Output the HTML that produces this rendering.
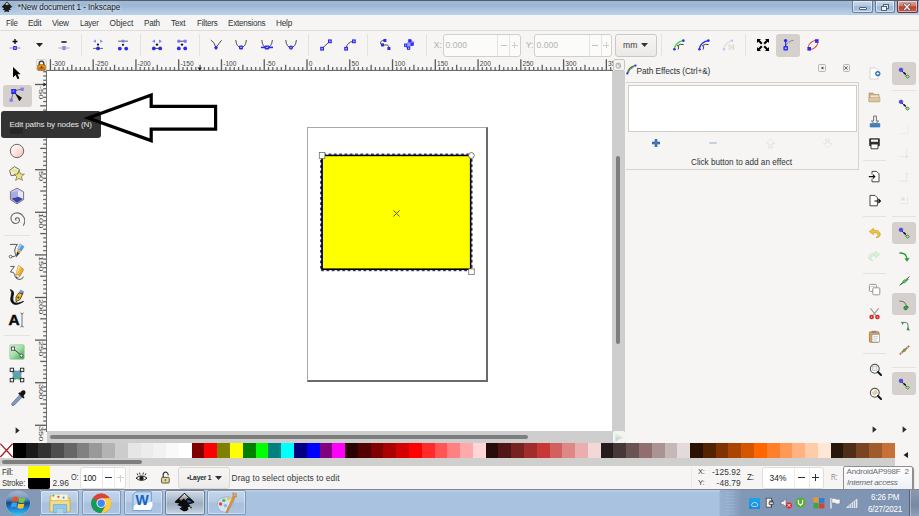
<!DOCTYPE html>
<html lang="en"><head><meta charset="utf-8"><title>*New document 1 - Inkscape</title>
<style>
html,body{margin:0;padding:0;}
html{width:919px;height:516px;overflow:hidden;background:#f6f5f4;}
body{width:919px;height:516px;overflow:hidden;position:relative;background:#f6f5f4;
 font-family:"Liberation Sans","DejaVu Sans",sans-serif;font-size:8.5px;color:#2e3436;}
div,span,svg{position:absolute;box-sizing:border-box;}
.t{white-space:nowrap;line-height:14px;height:14px;}
.sep{background:#e4e2df;}
.sel{background:#d5d0cc;border-radius:3px;}
.inp{background:#fbfbfa;border:1px solid #d2cfcb;border-radius:3px;}
</style></head>
<body>
<div style="left:0px;top:0px;width:919px;height:14.6px;background:linear-gradient(#a3bbd7 0,#a0b9d6 10%,#9cb6d3 38%,#a4bdd9 52%,#afc6e1 68%,#b4cbe5 82%,#b8d1eb 100%);"></div>
<div style="left:0px;top:0px;width:919px;height:1.2px;background:linear-gradient(#4a5361,#5d6878);"></div>
<span class="t" style="left:17.80px;top:1.10px;font-size:8.2px;color:#14181e;letter-spacing:-0.089px;text-shadow:0 0 3px rgba(255,255,255,.9),0 0 5px rgba(255,255,255,.6);">*New document 1 - Inkscape</span>
<svg style="left:1px;top:1px;width:12px;height:12px" viewBox="0 0 12 12"><path d="M6 0.6 L11.3 6 L8.6 7.2 L10.2 8.6 L7.6 9.2 L8.2 11 L5 10.6 L3.2 11.2 L3.8 9.2 L1.4 8.6 L3.2 7.2 L0.6 6 Z" fill="#1a1a1a"/><path d="M6 1.6 L8 3.8 L6.8 3.4 L6 4.2 L5 3.4 L3.9 3.9 Z" fill="#cfd6de"/></svg>
<div style="left:852.4px;top:1px;width:20.8px;height:11.6px;background:linear-gradient(#c6d8ed 0,#b2cae5 45%,#9cb9d9 52%,#adc7e5 100%);border:1px solid #6d7f96;border-top:none;border-radius:0 0 2.5px 2.5px;box-shadow:0 0 0 1px rgba(255,255,255,.5) inset;"></div>
<div style="left:874.8px;top:1px;width:20.6px;height:11.6px;background:linear-gradient(#c6d8ed 0,#b2cae5 45%,#9cb9d9 52%,#adc7e5 100%);border:1px solid #6d7f96;border-top:none;border-radius:0 0 2.5px 2.5px;box-shadow:0 0 0 1px rgba(255,255,255,.5) inset;"></div>
<div style="left:897px;top:1px;width:20.8px;height:11.6px;background:linear-gradient(#dba9a2 0,#d0786c 45%,#bd4232 52%,#c65a4c 100%);border:1px solid #6a3434;border-top:none;border-radius:0 0 2.5px 2.5px;box-shadow:0 0 0 1px rgba(255,255,255,.5) inset;"></div>
<div style="left:859px;top:7px;width:7.8px;height:2.8px;background:#f4f6f8;border:0.8px solid #55606e;border-radius:1px;"></div>
<div style="left:882.6px;top:3.8px;width:6px;height:5px;background:#dfe7f1;border:1px solid #55606e;"></div>
<div style="left:880.6px;top:5.8px;width:6px;height:5px;background:#eef2f7;border:1px solid #55606e;"></div>
<svg style="left:903.4px;top:3.2px;width:8px;height:8px" viewBox="0 0 8 8"><path d="M1.6 1.6 L6.4 6.4 M6.4 1.6 L1.6 6.4" stroke="#5a4a4a" stroke-width="2.6" stroke-linecap="square"/><path d="M1.6 1.6 L6.4 6.4 M6.4 1.6 L1.6 6.4" stroke="#f4f0f0" stroke-width="1.4" stroke-linecap="square"/></svg>
<div style="left:0px;top:15px;width:919px;height:15px;background:#f6f5f4;"></div>
<div style="left:0px;top:30px;width:919px;height:1px;background:#dfdcd9;"></div>
<span class="t" style="left:5.70px;top:15.70px;font-size:8.3px;color:#2e3436;letter-spacing:-0.220px;transform-origin:0 50%;transform:scaleX(0.9360);">File</span>
<span class="t" style="left:28.30px;top:15.70px;font-size:8.3px;color:#2e3436;letter-spacing:-0.220px;transform-origin:0 50%;transform:scaleX(0.9896);">Edit</span>
<span class="t" style="left:52.30px;top:15.70px;font-size:8.3px;color:#2e3436;letter-spacing:-0.220px;transform-origin:0 50%;transform:scaleX(0.9895);">View</span>
<span class="t" style="left:80.20px;top:15.70px;font-size:8.3px;color:#2e3436;letter-spacing:-0.220px;transform-origin:0 50%;transform:scaleX(0.9456);">Layer</span>
<span class="t" style="left:109.60px;top:15.70px;font-size:8.3px;color:#2e3436;letter-spacing:-0.058px;">Object</span>
<span class="t" style="left:144.00px;top:15.70px;font-size:8.3px;color:#2e3436;letter-spacing:-0.220px;transform-origin:0 50%;transform:scaleX(0.9748);">Path</span>
<span class="t" style="left:171.00px;top:15.70px;font-size:8.3px;color:#2e3436;letter-spacing:-0.220px;transform-origin:0 50%;transform:scaleX(0.9957);">Text</span>
<span class="t" style="left:196.60px;top:15.70px;font-size:8.3px;color:#2e3436;letter-spacing:-0.220px;transform-origin:0 50%;transform:scaleX(0.9730);">Filters</span>
<span class="t" style="left:227.50px;top:15.70px;font-size:8.3px;color:#2e3436;letter-spacing:-0.220px;transform-origin:0 50%;transform:scaleX(0.9710);">Extensions</span>
<span class="t" style="left:276.00px;top:15.70px;font-size:8.3px;color:#2e3436;letter-spacing:-0.220px;transform-origin:0 50%;transform:scaleX(0.9933);">Help</span>
<div class="sep" style="left:80.7px;top:34px;width:1px;height:22px;"></div>
<div class="sep" style="left:140.1px;top:34px;width:1px;height:22px;"></div>
<div class="sep" style="left:198.9px;top:34px;width:1px;height:22px;"></div>
<div class="sep" style="left:308.2px;top:34px;width:1px;height:22px;"></div>
<div class="sep" style="left:367.2px;top:34px;width:1px;height:22px;"></div>
<div class="sep" style="left:426.0px;top:34px;width:1px;height:22px;"></div>
<div class="sep" style="left:661.0px;top:34px;width:1px;height:22px;"></div>
<div class="sep" style="left:744.9px;top:34px;width:1px;height:22px;"></div>
<div class="sel" style="left:776px;top:33.5px;width:24px;height:23px;"></div>
<svg style="left:7.70px;top:38.00px;width:14px;height:14px" viewBox="0 0 14 14"><path d="M7 1 V6 M4.6 3.5 H9.4" stroke="#000" stroke-width="1.3"/><path d="M1.6 10 H12.4" stroke="#8a8a8a" stroke-width="0.9"/><rect x="5.2" y="8" width="3.6" height="4" fill="#2a2af0"/><rect x="6.2" y="9.2" width="1.6" height="1.6" fill="#b9b9ff"/></svg><svg style="left:35.50px;top:42.70px;width:7px;height:4px" viewBox="0 0 7 4"><path d="M0 0 H7 L3.5 4 Z" fill="#222"/></svg><svg style="left:57.00px;top:38.00px;width:14px;height:14px" viewBox="0 0 14 14"><path d="M4.4 4 H9.6" stroke="#000" stroke-width="1.4"/><path d="M1.6 10 H12.4" stroke="#a5a5a5" stroke-width="0.9"/><rect x="5.2" y="8" width="3.6" height="4" fill="#8d8df7"/></svg><svg style="left:91.00px;top:38.00px;width:14px;height:14px" viewBox="0 0 14 14"><path d="M2.2 3.2 L4.8 1.6 V4.8 Z M11.8 3.2 L9.2 1.6 V4.8 Z" fill="#7b7bf5"/><circle cx="7" cy="6.6" r="1.1" fill="#111"/><path d="M2 10.4 H12" stroke="#555" stroke-width="0.9"/><circle cx="7" cy="10.4" r="1.9" fill="#2a2af0"/></svg><svg style="left:115.80px;top:38.00px;width:14px;height:14px" viewBox="0 0 14 14"><path d="M2 3.2 H12" stroke="#555" stroke-width="0.9"/><rect x="5.4" y="1.8" width="3.2" height="2.8" rx="1" fill="#7b7bf5"/><circle cx="7" cy="6.8" r="1.1" fill="#111"/><circle cx="3.8" cy="10.6" r="1.9" fill="#2a2af0"/><circle cx="10.2" cy="10.6" r="1.9" fill="#2a2af0"/></svg><svg style="left:150.20px;top:38.00px;width:14px;height:14px" viewBox="0 0 14 14"><path d="M2 3.2 L5 1.4 V5 Z M12 3.2 L9 1.4 V5 Z" fill="#7b7bf5"/><circle cx="7" cy="6.6" r="1.2" fill="#111"/><path d="M3 10.4 H11" stroke="#333" stroke-width="0.9"/><circle cx="3.8" cy="10.4" r="1.9" fill="#2a2af0"/><circle cx="10.2" cy="10.4" r="1.9" fill="#2a2af0"/></svg><svg style="left:175.00px;top:38.00px;width:14px;height:14px" viewBox="0 0 14 14"><path d="M3 3.2 H11" stroke="#333" stroke-width="0.9"/><circle cx="3.8" cy="3.2" r="1.7" fill="#7b7bf5"/><circle cx="10.2" cy="3.2" r="1.7" fill="#7b7bf5"/><circle cx="7" cy="6.6" r="1.2" fill="#111"/><circle cx="3.8" cy="10.4" r="1.9" fill="#2a2af0"/><circle cx="10.2" cy="10.4" r="1.9" fill="#2a2af0"/></svg><svg style="left:209.40px;top:38.00px;width:14px;height:14px" viewBox="0 0 14 14"><path d="M1.8 2 Q5 3.4 7 9.6 Q9.6 6 12.6 2.2" fill="none" stroke="#3a3a3a" stroke-width="0.9"/><path d="M7 7.6 L9 9.8 L7 12 L5 9.8 Z" fill="#2a2af0"/></svg><svg style="left:234.30px;top:38.00px;width:14px;height:14px" viewBox="0 0 14 14"><path d="M1.8 2 Q2.4 9.4 7 9.4 Q11.6 9.4 12.4 2" fill="none" stroke="#3a3a3a" stroke-width="0.9"/><rect x="5" y="7.6" width="4" height="3.8" rx="0.8" fill="#2a2af0"/><rect x="6.1" y="8.8" width="1.8" height="1.2" fill="#a9a9ff"/></svg><svg style="left:259.50px;top:38.00px;width:14px;height:14px" viewBox="0 0 14 14"><path d="M1.8 2 Q2.4 9.4 7 9.4 Q11.6 9.4 12.4 2" fill="none" stroke="#3a3a3a" stroke-width="0.9"/><path d="M1 9.4 H13" stroke="#2a2af0" stroke-width="1.6"/><rect x="4.6" y="7.6" width="4.8" height="3.8" rx="0.8" fill="#2a2af0"/><rect x="5.8" y="8.8" width="2.4" height="1.2" fill="#a9a9ff"/></svg><svg style="left:284.30px;top:38.00px;width:14px;height:14px" viewBox="0 0 14 14"><path d="M1.8 2 Q2.4 9.4 7 9.4 Q11.6 9.4 12.4 2" fill="none" stroke="#3a3a3a" stroke-width="0.9"/><circle cx="7" cy="9.6" r="2.1" fill="#2a2af0"/><circle cx="7" cy="9.6" r="0.8" fill="#a9a9ff"/></svg><svg style="left:318.70px;top:38.00px;width:14px;height:14px" viewBox="0 0 14 14"><path d="M3 10.6 L10.8 3.2" stroke="#3a3a3a" stroke-width="0.9"/><rect x="1.2" y="8.8" width="3.8" height="3.8" fill="#2a2af0"/><rect x="2.3" y="9.9" width="1.6" height="1.6" fill="#a9a9ff"/><rect x="9" y="1.4" width="3.8" height="3.8" fill="#2a2af0"/><rect x="10.1" y="2.5" width="1.6" height="1.6" fill="#a9a9ff"/></svg><svg style="left:343.00px;top:38.00px;width:14px;height:14px" viewBox="0 0 14 14"><path d="M3 10.6 Q4 4 10.8 3.2" fill="none" stroke="#3a3a3a" stroke-width="0.9"/><rect x="1.2" y="8.8" width="3.8" height="3.8" fill="#2a2af0"/><rect x="2.3" y="9.9" width="1.6" height="1.6" fill="#a9a9ff"/><rect x="9" y="1.4" width="3.8" height="3.8" fill="#2a2af0"/><rect x="10.1" y="2.5" width="1.6" height="1.6" fill="#a9a9ff"/></svg><svg style="left:377.70px;top:38.00px;width:14px;height:14px" viewBox="0 0 14 14"><path d="M6.6 2.4 Q2 2 2.6 6 Q3.4 8 7 7 Q11.4 6 11 11" fill="none" stroke="#555" stroke-width="1"/><rect x="5.4" y="1" width="3" height="3" fill="#2a2af0"/><rect x="3" y="5.4" width="3" height="3" fill="#2a2af0"/><rect x="9.4" y="9" width="3" height="3" fill="#2a2af0"/></svg><svg style="left:402.20px;top:38.00px;width:14px;height:14px" viewBox="0 0 14 14"><path d="M2 7.6 L8.6 1.6 L12.6 4 L6 12 Z" fill="#9a9af8"/><rect x="6.2" y="1.2" width="3.2" height="3.2" fill="#2a2af0"/><rect x="2" y="5.6" width="3.2" height="3.2" fill="#2a2af0"/><rect x="8.6" y="4.6" width="3.2" height="3.2" fill="#2a2af0"/><rect x="5" y="8.6" width="3.2" height="3.2" fill="#2a2af0"/><rect x="3" y="6.6" width="1.2" height="1.2" fill="#c5c5ff"/><rect x="6" y="9.6" width="1.2" height="1.2" fill="#c5c5ff"/></svg><svg style="left:672.00px;top:38.00px;width:14px;height:14px" viewBox="0 0 14 14"><path d="M2.4 11 Q3.4 4 11.4 2.6" fill="none" stroke="#3fd13f" stroke-width="1.2"/><path d="M6 11.6 Q7.6 8.4 5 7.4 M6 7.4 Q8.6 5.6 11.6 6.6" fill="none" stroke="#2a2a2a" stroke-width="0.9"/><circle cx="2.4" cy="11.2" r="1.3" fill="#2a2af0"/><circle cx="11.4" cy="2.6" r="1.3" fill="#2a2af0"/></svg><svg style="left:696.90px;top:38.00px;width:14px;height:14px" viewBox="0 0 14 14"><path d="M2.4 11 Q3.4 4 11.4 2.6" fill="none" stroke="#2a2af0" stroke-width="1.2"/><path d="M6 11.6 Q7.6 8.4 5 7.4 M6 7.4 Q8.6 5.6 11.6 6.6" fill="none" stroke="#2a2a2a" stroke-width="0.9"/><circle cx="2.4" cy="11.2" r="1.3" fill="#2a2af0"/><circle cx="11.4" cy="2.6" r="1.3" fill="#2a2af0"/></svg><svg style="left:721.40px;top:38.00px;width:14px;height:14px" viewBox="0 0 14 14"><g opacity="0.4"><path d="M3 11 Q4 5 11 2.6" fill="none" stroke="#8a8a8a" stroke-width="1.1" stroke-dasharray="1.4 1"/><path d="M8 6.6 L11.6 9.2 L8 11.8 Z" fill="#f2e08a" stroke="#9a9a9a" stroke-width="0.6"/><path d="M12.4 6.6 V11.8" stroke="#8a8a8a" stroke-width="0.9"/><circle cx="3" cy="11.2" r="1.2" fill="#7b7bf5"/><circle cx="11" cy="2.6" r="1.2" fill="#7b7bf5"/></g></svg><svg style="left:755.80px;top:38.00px;width:14px;height:14px" viewBox="0 0 14 14"><path d="M2.6 2.6 L5.8 5.8 M11.4 2.6 L8.2 5.8 M2.6 11.4 L5.8 8.2 M11.4 11.4 L8.2 8.2" stroke="#000" stroke-width="2.1"/><path d="M1 1 H5 L1 5 Z M13 1 H9 L13 5 Z M1 13 H5 L1 9 Z M13 13 H9 L13 9 Z" fill="#000"/></svg><svg style="left:780.50px;top:38.00px;width:14px;height:14px" viewBox="0 0 14 14"><path d="M4.6 8 Q6 3.6 12.6 2.2" fill="none" stroke="#8a8a8a" stroke-width="1"/><path d="M4.6 3 V9" stroke="#2a2af0" stroke-width="1.1"/><circle cx="4.6" cy="2.6" r="1.7" fill="#2a2af0"/><rect x="2.4" y="8" width="4.6" height="4.6" rx="0.8" fill="#2a2af0"/><rect x="3.8" y="9.4" width="1.8" height="1.8" fill="#c5c5ff"/></svg><svg style="left:805.60px;top:38.00px;width:14px;height:14px" viewBox="0 0 14 14"><ellipse cx="7" cy="7" rx="5.6" ry="3.2" transform="rotate(-42 7 7)" fill="none" stroke="#ee3b3b" stroke-width="1.1"/><rect x="9" y="1.2" width="3.6" height="3.6" fill="#2a2af0"/><rect x="1.4" y="9" width="3.6" height="3.6" fill="#2a2af0"/></svg>
<span class="t" style="left:433.80px;top:38.00px;font-size:8.6px;color:#aeaca9;">X:</span>
<div class="inp" style="left:443px;top:33.5px;width:77.5px;height:23px;"></div>
<div style="left:497px;top:34.5px;width:1px;height:21px;background:#e6e4e1;"></div>
<div style="left:509px;top:34.5px;width:1px;height:21px;background:#e6e4e1;"></div>
<span class="t" style="left:445.50px;top:38.00px;font-size:8.6px;color:#b4b2af;">0.000</span>
<div style="left:500.5px;top:44.5px;width:6px;height:1px;background:#c4c2bf;"></div>
<div style="left:511.75px;top:44.5px;width:6px;height:1px;background:#cfcdca;"></div>
<div style="left:514.25px;top:42px;width:1px;height:6px;background:#cfcdca;"></div>
<span class="t" style="left:525.70px;top:38.00px;font-size:8.6px;color:#aeaca9;">Y:</span>
<div class="inp" style="left:534px;top:33.5px;width:78px;height:23px;"></div>
<div style="left:588.5px;top:34.5px;width:1px;height:21px;background:#e6e4e1;"></div>
<div style="left:600.5px;top:34.5px;width:1px;height:21px;background:#e6e4e1;"></div>
<span class="t" style="left:536.60px;top:38.00px;font-size:8.6px;color:#b4b2af;">0.000</span>
<div style="left:592.0px;top:44.5px;width:6px;height:1px;background:#c4c2bf;"></div>
<div style="left:603.25px;top:44.5px;width:6px;height:1px;background:#cfcdca;"></div>
<div style="left:605.75px;top:42px;width:1px;height:6px;background:#cfcdca;"></div>
<div style="left:615px;top:33.5px;width:42px;height:23px;background:linear-gradient(#f7f6f5,#ebe9e7);border:1px solid #cdc7c2;border-radius:3px;"></div>
<span class="t" style="left:623.00px;top:38.00px;font-size:8.6px;color:#3a3d3f;">mm</span>
<svg style="left:641px;top:43px;width:7px;height:4px" viewBox="0 0 7 4"><path d="M0 0 H7 L3.5 4 Z" fill="#2e3436"/></svg>
<div style="left:0px;top:58px;width:36px;height:385px;background:#f6f5f4;"></div>
<div class="sel" style="left:2.5px;top:84.8px;width:29px;height:22px;"></div>
<div class="sep" style="left:4px;top:235px;width:26px;height:1px;"></div>
<div class="sep" style="left:4px;top:335px;width:26px;height:1px;"></div>
<svg style="left:11.00px;top:65.50px;width:10px;height:14px" viewBox="0 0 10 14"><path d="M2 1 V11.4 L4.6 9 L6.6 13.2 L8.4 12.2 L6.4 8.2 H9.6 Z" fill="#000"/></svg><svg style="left:7.60px;top:87.40px;width:18px;height:16px" viewBox="0 0 18 16"><path d="M5.4 5 Q4.6 8 3.2 13 M6 4.4 Q10 2.4 15 2.2" fill="none" stroke="#555" stroke-width="0.8"/><rect x="3.2" y="2" width="5" height="5" fill="#2a2af0"/><rect x="4.6" y="3.4" width="1.8" height="1.4" fill="#8f8ff8"/><rect x="12.6" y="0.6" width="3.2" height="3.2" fill="#7b7bf5"/><rect x="1.6" y="11.6" width="3.2" height="3.2" fill="#7b7bf5"/><path d="M7 6.2 L14 10.8 L11.4 14.2 Z" fill="#0a0a0a"/></svg><svg style="left:9.00px;top:143.00px;width:16px;height:16px" viewBox="0 0 16 16"><defs><linearGradient id="cg" x1="0" y1="0" x2="1" y2="1"><stop offset="0" stop-color="#fff"/><stop offset="0.45" stop-color="#fde8e4"/><stop offset="1" stop-color="#f7b7b7"/></linearGradient></defs><circle cx="8" cy="8" r="6.7" fill="url(#cg)" stroke="#6a6a6a" stroke-width="1"/></svg><svg style="left:7.80px;top:165.10px;width:18px;height:17px" viewBox="0 0 18 17"><path d="M1.6 5.4 L6.4 1.6 L11.6 4.6 L9 10 L3 10.6 Z" fill="#f4f0c2" stroke="#6e6e6e" stroke-width="1"/><path d="M4.4 6.4 Q7.4 4.4 9.4 7" fill="none" stroke="#efe27a" stroke-width="1.8"/><path d="M11.2 5.6 L12.6 9 L16.4 9.2 L13.4 11.6 L14.4 15.4 L11 13.4 L7.6 15.4 L8.8 11.6 L6 9.2 L9.8 9 Z" fill="#f2e36a" stroke="#777" stroke-width="0.8"/></svg><svg style="left:9.00px;top:187.00px;width:16px;height:18px" viewBox="0 0 16 18"><path d="M8 1.2 L14.6 4.8 V12.6 L8 16.8 L1.4 12.6 V4.8 Z" fill="#b9b9ea" stroke="#777" stroke-width="1"/><path d="M8 1.8 L14 5 L9 9.6 V9.6 L2 5 Z" fill="#c9c9f4"/><path d="M9 3.4 L14 5.2 V11.6 L9 9.6 Z" fill="#e6e6fb"/><path d="M2.4 11.4 L9 9.8 L13.8 12 L8 15.8 Z" fill="#3f3fa8"/><path d="M2 5.4 L9 4 V9.8 L2.4 11.6 Z" fill="#a5a5e2" opacity="0.85"/></svg><svg style="left:8.10px;top:210.90px;width:17px;height:17px" viewBox="0 0 17 17"><path d="M8.6 9.2 A1 1 0 0 1 7.4 8 A2.2 2.2 0 0 1 10.4 7 A3.4 3.4 0 0 1 10.8 11.2 A4.6 4.6 0 0 1 4.4 11 A5.9 5.9 0 0 1 4.6 3.4 A7 7 0 0 1 14.4 4.4 A7.6 7.6 0 0 1 15.2 14.6" fill="none" stroke="#6a6a6a" stroke-width="1.1"/></svg><svg style="left:7.80px;top:241.60px;width:18px;height:18px" viewBox="0 0 18 18"><path d="M2 2.4 H9.4 Q4.8 8 8.2 13.4 Q6 15.2 3 14.6" fill="none" stroke="#555" stroke-width="1"/><circle cx="2.6" cy="14.6" r="1.4" fill="#fff" stroke="#444" stroke-width="0.8"/><path d="M12 1.6 L16.4 4.6 L13.4 9.4 L9.4 7 Z" fill="#5a9ad8"/><path d="M12 1.6 L14 3 L11 7.8 L9.4 7 Z" fill="#9cc6ee"/><path d="M9.6 7.4 L13 9.4 L11.6 11.2 L9 9.8 Z" fill="#e9a22a"/><path d="M9 9.8 L11.6 11.2 L8 15.4 Z" fill="#2a2a2a"/></svg><svg style="left:7.60px;top:264.40px;width:18px;height:18px" viewBox="0 0 18 18"><path d="M2.4 2.4 H6.4 L2.4 8 Q6 7.4 6.6 10.6 Q7.4 15.6 12 15.4 Q15 15 15.4 12.6" fill="none" stroke="#5a5a5a" stroke-width="1"/><path d="M10.6 1.4 L15.6 5.4 L12 12 L8.6 14 L8 10 Z" fill="#f3b32a" stroke="#7a4a08" stroke-width="0.5"/><path d="M10.6 1.4 L12.6 3 L9 10 L8 10 Z" fill="#fbe08a"/><path d="M8 10 L12 12 L8.6 14.4 Z" fill="#fff" stroke="#555" stroke-width="0.4"/><path d="M8.4 13 L9.8 13.4 L8.6 14.6 Z" fill="#111"/></svg><svg style="left:7.80px;top:287.80px;width:18px;height:18px" viewBox="0 0 18 18"><path d="M2.4 1.6 Q7 3 5 8.4 Q4 12.4 6.4 14.8 Q9.6 16 15.6 13.4 Q9 17.8 5.2 15.8 Q1.6 13.6 3.2 8 Q4.4 4 2.4 1.6 Z" fill="#0c0c0c" stroke="#0c0c0c" stroke-width="0.8"/><path d="M12.4 1.4 L16.2 3.6 L14.4 6.4 L11 4.6 Z" fill="#6aa2dc"/><path d="M14 4.2 L15.6 5 L14.8 6.6 L13.4 6 Z" fill="#c0281a"/><path d="M11 4.6 L14.4 6.4 L12 11.6 L8 13.6 L8 9 Z" fill="#f0c030" stroke="#3a2a08" stroke-width="0.8"/><circle cx="10.4" cy="9.4" r="1" fill="#3a2a08"/></svg><span class="t" style="left:8.5px;top:311px;font-size:15.4px;line-height:18px;height:18px;font-weight:bold;color:#0a0a0a;-webkit-text-stroke:0.5px #0a0a0a;">A</span><svg style="left:20.30px;top:311.60px;width:4px;height:16px" viewBox="0 0 4 16"><path d="M0.4 1 Q2 1 2 2.6 V13.4 Q2 15 0.4 15 M3.6 1 Q2 1 2 2.6 M2 13.4 Q2 15 3.6 15" fill="none" stroke="#555" stroke-width="0.8"/></svg><svg style="left:8.60px;top:343.80px;width:16px;height:16px" viewBox="0 0 16 16"><defs><linearGradient id="gg" x1="1" y1="1" x2="0" y2="0"><stop offset="0" stop-color="#2f9a3a"/><stop offset="0.5" stop-color="#a5dba8"/><stop offset="1" stop-color="#eaf7ea"/></linearGradient></defs><rect x="0.8" y="0.8" width="14.4" height="14.4" rx="1.2" fill="url(#gg)" stroke="#8fd093" stroke-width="0.8"/><path d="M4 4.6 L12.4 11.4" stroke="#3a3a3a" stroke-width="0.9"/><rect x="2.4" y="3" width="3.2" height="3.2" fill="#fff" stroke="#333" stroke-width="0.8"/><circle cx="12.4" cy="11.6" r="1.5" fill="#fff" stroke="#333" stroke-width="0.8"/></svg><svg style="left:8.80px;top:367.20px;width:16px;height:16px" viewBox="0 0 16 16"><path d="M3 3 Q8 5.6 13 3 Q10.6 8 13 13 Q8 10.6 3 13 Q5.6 8 3 3 Z" fill="#5aa98e" stroke="#3a7a9a" stroke-width="0.6"/><path d="M3 3 Q8 5.6 13 3 L10 8 Q6 6.6 4.4 8 Z" fill="#6a9ad8" opacity="0.75"/><rect x="1.2" y="1.2" width="3.4" height="3.4" fill="#eee" stroke="#222" stroke-width="0.9"/><rect x="11.4" y="1.2" width="3.4" height="3.4" fill="#eee" stroke="#222" stroke-width="0.9"/><rect x="1.2" y="11.4" width="3.4" height="3.4" fill="#eee" stroke="#222" stroke-width="0.9"/><rect x="11.4" y="11.4" width="3.4" height="3.4" fill="#eee" stroke="#222" stroke-width="0.9"/></svg><svg style="left:9.80px;top:388.60px;width:16px;height:18px" viewBox="0 0 16 18"><path d="M9.6 6 L12 8.2 L4.4 16 Q3 17.2 2 16.2 Q1.2 15.2 2.2 14 Z" fill="#7f9cc0" stroke="#4a5a70" stroke-width="0.6"/><path d="M8.2 4.4 L13.4 9.4 L14.6 8.2 L9.4 3.2 Z" fill="#111"/><path d="M10.6 3 Q12.4 0.4 14.6 1.6 Q16.4 3.2 14.6 5.6 L13 7.6 L10 4.4 Z" fill="#111"/></svg><svg style="left:14.90px;top:426.50px;width:5px;height:7px" viewBox="0 0 5 7"><path d="M0.6 0.2 V6.8 L4.6 3.5 Z" fill="#2a2a2a"/></svg>
<svg style="left:46px;top:58px;width:567px;height:13px" viewBox="46 58 567 13"><rect x="46" y="58" width="567" height="13" fill="#f6f5f4"/><rect x="46" y="69.9" width="567" height="1.1" fill="#6e6e6e"/><rect x="49.76" y="59.3" width="1.3" height="11" fill="#5a5a5a"/><rect x="54.04" y="67" width="1.3" height="3.5" fill="#686868"/><rect x="58.31" y="67" width="1.3" height="3.5" fill="#686868"/><rect x="62.59" y="67" width="1.3" height="3.5" fill="#686868"/><rect x="66.87" y="67" width="1.3" height="3.5" fill="#686868"/><rect x="71.14" y="64.8" width="1.3" height="6" fill="#606060"/><rect x="75.42" y="67" width="1.3" height="3.5" fill="#686868"/><rect x="79.70" y="67" width="1.3" height="3.5" fill="#686868"/><rect x="83.97" y="67" width="1.3" height="3.5" fill="#686868"/><rect x="88.25" y="67" width="1.3" height="3.5" fill="#686868"/><rect x="92.53" y="59.3" width="1.3" height="11" fill="#5a5a5a"/><rect x="96.80" y="67" width="1.3" height="3.5" fill="#686868"/><rect x="101.08" y="67" width="1.3" height="3.5" fill="#686868"/><rect x="105.35" y="67" width="1.3" height="3.5" fill="#686868"/><rect x="109.63" y="67" width="1.3" height="3.5" fill="#686868"/><rect x="113.91" y="64.8" width="1.3" height="6" fill="#606060"/><rect x="118.18" y="67" width="1.3" height="3.5" fill="#686868"/><rect x="122.46" y="67" width="1.3" height="3.5" fill="#686868"/><rect x="126.74" y="67" width="1.3" height="3.5" fill="#686868"/><rect x="131.01" y="67" width="1.3" height="3.5" fill="#686868"/><rect x="135.29" y="59.3" width="1.3" height="11" fill="#5a5a5a"/><rect x="139.57" y="67" width="1.3" height="3.5" fill="#686868"/><rect x="143.84" y="67" width="1.3" height="3.5" fill="#686868"/><rect x="148.12" y="67" width="1.3" height="3.5" fill="#686868"/><rect x="152.40" y="67" width="1.3" height="3.5" fill="#686868"/><rect x="156.67" y="64.8" width="1.3" height="6" fill="#606060"/><rect x="160.95" y="67" width="1.3" height="3.5" fill="#686868"/><rect x="165.23" y="67" width="1.3" height="3.5" fill="#686868"/><rect x="169.50" y="67" width="1.3" height="3.5" fill="#686868"/><rect x="173.78" y="67" width="1.3" height="3.5" fill="#686868"/><rect x="178.06" y="59.3" width="1.3" height="11" fill="#5a5a5a"/><rect x="182.33" y="67" width="1.3" height="3.5" fill="#686868"/><rect x="186.61" y="67" width="1.3" height="3.5" fill="#686868"/><rect x="190.88" y="67" width="1.3" height="3.5" fill="#686868"/><rect x="195.16" y="67" width="1.3" height="3.5" fill="#686868"/><rect x="199.44" y="64.8" width="1.3" height="6" fill="#606060"/><rect x="203.71" y="67" width="1.3" height="3.5" fill="#686868"/><rect x="207.99" y="67" width="1.3" height="3.5" fill="#686868"/><rect x="212.27" y="67" width="1.3" height="3.5" fill="#686868"/><rect x="216.54" y="67" width="1.3" height="3.5" fill="#686868"/><rect x="220.82" y="59.3" width="1.3" height="11" fill="#5a5a5a"/><rect x="225.10" y="67" width="1.3" height="3.5" fill="#686868"/><rect x="229.37" y="67" width="1.3" height="3.5" fill="#686868"/><rect x="233.65" y="67" width="1.3" height="3.5" fill="#686868"/><rect x="237.93" y="67" width="1.3" height="3.5" fill="#686868"/><rect x="242.20" y="64.8" width="1.3" height="6" fill="#606060"/><rect x="246.48" y="67" width="1.3" height="3.5" fill="#686868"/><rect x="250.76" y="67" width="1.3" height="3.5" fill="#686868"/><rect x="255.03" y="67" width="1.3" height="3.5" fill="#686868"/><rect x="259.31" y="67" width="1.3" height="3.5" fill="#686868"/><rect x="263.59" y="59.3" width="1.3" height="11" fill="#5a5a5a"/><rect x="267.86" y="67" width="1.3" height="3.5" fill="#686868"/><rect x="272.14" y="67" width="1.3" height="3.5" fill="#686868"/><rect x="276.41" y="67" width="1.3" height="3.5" fill="#686868"/><rect x="280.69" y="67" width="1.3" height="3.5" fill="#686868"/><rect x="284.97" y="64.8" width="1.3" height="6" fill="#606060"/><rect x="289.24" y="67" width="1.3" height="3.5" fill="#686868"/><rect x="293.52" y="67" width="1.3" height="3.5" fill="#686868"/><rect x="297.80" y="67" width="1.3" height="3.5" fill="#686868"/><rect x="302.07" y="67" width="1.3" height="3.5" fill="#686868"/><rect x="306.35" y="59.3" width="1.3" height="11" fill="#5a5a5a"/><rect x="310.63" y="67" width="1.3" height="3.5" fill="#686868"/><rect x="314.90" y="67" width="1.3" height="3.5" fill="#686868"/><rect x="319.18" y="67" width="1.3" height="3.5" fill="#686868"/><rect x="323.46" y="67" width="1.3" height="3.5" fill="#686868"/><rect x="327.73" y="64.8" width="1.3" height="6" fill="#606060"/><rect x="332.01" y="67" width="1.3" height="3.5" fill="#686868"/><rect x="336.29" y="67" width="1.3" height="3.5" fill="#686868"/><rect x="340.56" y="67" width="1.3" height="3.5" fill="#686868"/><rect x="344.84" y="67" width="1.3" height="3.5" fill="#686868"/><rect x="349.12" y="59.3" width="1.3" height="11" fill="#5a5a5a"/><rect x="353.39" y="67" width="1.3" height="3.5" fill="#686868"/><rect x="357.67" y="67" width="1.3" height="3.5" fill="#686868"/><rect x="361.94" y="67" width="1.3" height="3.5" fill="#686868"/><rect x="366.22" y="67" width="1.3" height="3.5" fill="#686868"/><rect x="370.50" y="64.8" width="1.3" height="6" fill="#606060"/><rect x="374.77" y="67" width="1.3" height="3.5" fill="#686868"/><rect x="379.05" y="67" width="1.3" height="3.5" fill="#686868"/><rect x="383.33" y="67" width="1.3" height="3.5" fill="#686868"/><rect x="387.60" y="67" width="1.3" height="3.5" fill="#686868"/><rect x="391.88" y="59.3" width="1.3" height="11" fill="#5a5a5a"/><rect x="396.16" y="67" width="1.3" height="3.5" fill="#686868"/><rect x="400.43" y="67" width="1.3" height="3.5" fill="#686868"/><rect x="404.71" y="67" width="1.3" height="3.5" fill="#686868"/><rect x="408.99" y="67" width="1.3" height="3.5" fill="#686868"/><rect x="413.26" y="64.8" width="1.3" height="6" fill="#606060"/><rect x="417.54" y="67" width="1.3" height="3.5" fill="#686868"/><rect x="421.82" y="67" width="1.3" height="3.5" fill="#686868"/><rect x="426.09" y="67" width="1.3" height="3.5" fill="#686868"/><rect x="430.37" y="67" width="1.3" height="3.5" fill="#686868"/><rect x="434.64" y="59.3" width="1.3" height="11" fill="#5a5a5a"/><rect x="438.92" y="67" width="1.3" height="3.5" fill="#686868"/><rect x="443.20" y="67" width="1.3" height="3.5" fill="#686868"/><rect x="447.47" y="67" width="1.3" height="3.5" fill="#686868"/><rect x="451.75" y="67" width="1.3" height="3.5" fill="#686868"/><rect x="456.03" y="64.8" width="1.3" height="6" fill="#606060"/><rect x="460.30" y="67" width="1.3" height="3.5" fill="#686868"/><rect x="464.58" y="67" width="1.3" height="3.5" fill="#686868"/><rect x="468.86" y="67" width="1.3" height="3.5" fill="#686868"/><rect x="473.13" y="67" width="1.3" height="3.5" fill="#686868"/><rect x="477.41" y="59.3" width="1.3" height="11" fill="#5a5a5a"/><rect x="481.69" y="67" width="1.3" height="3.5" fill="#686868"/><rect x="485.96" y="67" width="1.3" height="3.5" fill="#686868"/><rect x="490.24" y="67" width="1.3" height="3.5" fill="#686868"/><rect x="494.52" y="67" width="1.3" height="3.5" fill="#686868"/><rect x="498.79" y="64.8" width="1.3" height="6" fill="#606060"/><rect x="503.07" y="67" width="1.3" height="3.5" fill="#686868"/><rect x="507.35" y="67" width="1.3" height="3.5" fill="#686868"/><rect x="511.62" y="67" width="1.3" height="3.5" fill="#686868"/><rect x="515.90" y="67" width="1.3" height="3.5" fill="#686868"/><rect x="520.18" y="59.3" width="1.3" height="11" fill="#5a5a5a"/><rect x="524.45" y="67" width="1.3" height="3.5" fill="#686868"/><rect x="528.73" y="67" width="1.3" height="3.5" fill="#686868"/><rect x="533.00" y="67" width="1.3" height="3.5" fill="#686868"/><rect x="537.28" y="67" width="1.3" height="3.5" fill="#686868"/><rect x="541.56" y="64.8" width="1.3" height="6" fill="#606060"/><rect x="545.83" y="67" width="1.3" height="3.5" fill="#686868"/><rect x="550.11" y="67" width="1.3" height="3.5" fill="#686868"/><rect x="554.39" y="67" width="1.3" height="3.5" fill="#686868"/><rect x="558.66" y="67" width="1.3" height="3.5" fill="#686868"/><rect x="562.94" y="59.3" width="1.3" height="11" fill="#5a5a5a"/><rect x="567.22" y="67" width="1.3" height="3.5" fill="#686868"/><rect x="571.49" y="67" width="1.3" height="3.5" fill="#686868"/><rect x="575.77" y="67" width="1.3" height="3.5" fill="#686868"/><rect x="580.05" y="67" width="1.3" height="3.5" fill="#686868"/><rect x="584.32" y="64.8" width="1.3" height="6" fill="#606060"/><rect x="588.60" y="67" width="1.3" height="3.5" fill="#686868"/><rect x="592.88" y="67" width="1.3" height="3.5" fill="#686868"/><rect x="597.15" y="67" width="1.3" height="3.5" fill="#686868"/><rect x="601.43" y="67" width="1.3" height="3.5" fill="#686868"/><rect x="605.71" y="59.3" width="1.3" height="11" fill="#5a5a5a"/><rect x="609.98" y="67" width="1.3" height="3.5" fill="#686868"/></svg>
<span class="t" style="left:52.10px;top:57.10px;font-size:6.6px;color:#454545;">-300</span>
<span class="t" style="left:94.90px;top:57.10px;font-size:6.6px;color:#454545;">-250</span>
<span class="t" style="left:137.60px;top:57.10px;font-size:6.6px;color:#454545;">-200</span>
<span class="t" style="left:180.40px;top:57.10px;font-size:6.6px;color:#454545;">-150</span>
<span class="t" style="left:223.20px;top:57.10px;font-size:6.6px;color:#454545;">-100</span>
<span class="t" style="left:265.90px;top:57.10px;font-size:6.6px;color:#454545;">-50</span>
<span class="t" style="left:308.70px;top:57.10px;font-size:6.6px;color:#454545;">0</span>
<span class="t" style="left:351.50px;top:57.10px;font-size:6.6px;color:#454545;">50</span>
<span class="t" style="left:394.20px;top:57.10px;font-size:6.6px;color:#454545;">100</span>
<span class="t" style="left:437.00px;top:57.10px;font-size:6.6px;color:#454545;">150</span>
<span class="t" style="left:479.80px;top:57.10px;font-size:6.6px;color:#454545;">200</span>
<span class="t" style="left:522.50px;top:57.10px;font-size:6.6px;color:#454545;">250</span>
<span class="t" style="left:565.30px;top:57.10px;font-size:6.6px;color:#454545;">300</span>
<span class="t" style="left:608.10px;top:57.10px;font-size:6.6px;color:#454545;">350</span>
<svg style="left:196.6px;top:66.6px;width:5.4px;height:4px" viewBox="0 0 5.4 4"><path d="M0.4 0.4 H5 L2.7 3.6 Z" fill="#222"/></svg>
<div style="left:36px;top:59px;width:11px;height:12px;background:#f1efed;border:1px solid #d9d6d2;border-radius:2px;"></div>
<svg style="left:37px;top:59.5px;width:9px;height:11px" viewBox="0 0 9 11"><path d="M2.2 5 V3.4 A2.3 2.3 0 0 1 6.8 3.4 V5" fill="none" stroke="#3a3a3a" stroke-width="1.3"/><rect x="0.8" y="4.8" width="7.4" height="5.4" rx="0.8" fill="#e9a21a" stroke="#8a4b06" stroke-width="0.8"/><rect x="1.6" y="7.4" width="5.8" height="2.2" fill="#c96a07"/><circle cx="4.5" cy="7.2" r="0.9" fill="#3b2a10"/></svg>
<div style="left:36px;top:71px;width:11px;height:361px;background:#f6f5f4;"></div>
<span class="t" style="left:43.2px;top:85.5px;height:6px;line-height:6px;font-size:4.6px;color:#3f3f3f;transform-origin:0 0;transform:rotate(90deg) scale(2.0,1);">-50</span>
<span class="t" style="left:43.2px;top:128.1px;height:6px;line-height:6px;font-size:4.6px;color:#3f3f3f;transform-origin:0 0;transform:rotate(90deg) scale(2.0,1);">0</span>
<span class="t" style="left:43.2px;top:170.7px;height:6px;line-height:6px;font-size:4.6px;color:#3f3f3f;transform-origin:0 0;transform:rotate(90deg) scale(2.0,1);">50</span>
<span class="t" style="left:43.2px;top:213.3px;height:6px;line-height:6px;font-size:4.6px;color:#3f3f3f;transform-origin:0 0;transform:rotate(90deg) scale(2.0,1);">100</span>
<span class="t" style="left:43.2px;top:255.9px;height:6px;line-height:6px;font-size:4.6px;color:#3f3f3f;transform-origin:0 0;transform:rotate(90deg) scale(2.0,1);">150</span>
<span class="t" style="left:43.2px;top:298.5px;height:6px;line-height:6px;font-size:4.6px;color:#3f3f3f;transform-origin:0 0;transform:rotate(90deg) scale(2.0,1);">200</span>
<span class="t" style="left:43.2px;top:341.1px;height:6px;line-height:6px;font-size:4.6px;color:#3f3f3f;transform-origin:0 0;transform:rotate(90deg) scale(2.0,1);">250</span>
<span class="t" style="left:43.2px;top:383.7px;height:6px;line-height:6px;font-size:4.6px;color:#3f3f3f;transform-origin:0 0;transform:rotate(90deg) scale(2.0,1);">300</span>
<span class="t" style="left:43.2px;top:426.3px;height:6px;line-height:6px;font-size:4.6px;color:#3f3f3f;transform-origin:0 0;transform:rotate(90deg) scale(2.0,1);">350</span>
<svg style="left:34px;top:71px;width:13px;height:361px" viewBox="34 71 13 361"><rect x="46" y="71" width="1.1" height="361" fill="#6e6e6e"/><rect x="43.2" y="71.07" width="3" height="1.3" fill="#686868"/><rect x="43.2" y="75.33" width="3" height="1.3" fill="#686868"/><rect x="43.2" y="79.59" width="3" height="1.3" fill="#686868"/><rect x="35" y="83.85" width="11.5" height="1.3" fill="#5a5a5a"/><rect x="43.2" y="88.11" width="3" height="1.3" fill="#686868"/><rect x="43.2" y="92.37" width="3" height="1.3" fill="#686868"/><rect x="43.2" y="96.63" width="3" height="1.3" fill="#686868"/><rect x="43.2" y="100.89" width="3" height="1.3" fill="#686868"/><rect x="40.2" y="105.15" width="6" height="1.3" fill="#606060"/><rect x="43.2" y="109.41" width="3" height="1.3" fill="#686868"/><rect x="43.2" y="113.67" width="3" height="1.3" fill="#686868"/><rect x="43.2" y="117.93" width="3" height="1.3" fill="#686868"/><rect x="43.2" y="122.19" width="3" height="1.3" fill="#686868"/><rect x="35" y="126.45" width="11.5" height="1.3" fill="#5a5a5a"/><rect x="43.2" y="130.71" width="3" height="1.3" fill="#686868"/><rect x="43.2" y="134.97" width="3" height="1.3" fill="#686868"/><rect x="43.2" y="139.23" width="3" height="1.3" fill="#686868"/><rect x="43.2" y="143.49" width="3" height="1.3" fill="#686868"/><rect x="40.2" y="147.75" width="6" height="1.3" fill="#606060"/><rect x="43.2" y="152.01" width="3" height="1.3" fill="#686868"/><rect x="43.2" y="156.27" width="3" height="1.3" fill="#686868"/><rect x="43.2" y="160.53" width="3" height="1.3" fill="#686868"/><rect x="43.2" y="164.79" width="3" height="1.3" fill="#686868"/><rect x="35" y="169.05" width="11.5" height="1.3" fill="#5a5a5a"/><rect x="43.2" y="173.31" width="3" height="1.3" fill="#686868"/><rect x="43.2" y="177.57" width="3" height="1.3" fill="#686868"/><rect x="43.2" y="181.83" width="3" height="1.3" fill="#686868"/><rect x="43.2" y="186.09" width="3" height="1.3" fill="#686868"/><rect x="40.2" y="190.35" width="6" height="1.3" fill="#606060"/><rect x="43.2" y="194.61" width="3" height="1.3" fill="#686868"/><rect x="43.2" y="198.87" width="3" height="1.3" fill="#686868"/><rect x="43.2" y="203.13" width="3" height="1.3" fill="#686868"/><rect x="43.2" y="207.39" width="3" height="1.3" fill="#686868"/><rect x="35" y="211.65" width="11.5" height="1.3" fill="#5a5a5a"/><rect x="43.2" y="215.91" width="3" height="1.3" fill="#686868"/><rect x="43.2" y="220.17" width="3" height="1.3" fill="#686868"/><rect x="43.2" y="224.43" width="3" height="1.3" fill="#686868"/><rect x="43.2" y="228.69" width="3" height="1.3" fill="#686868"/><rect x="40.2" y="232.95" width="6" height="1.3" fill="#606060"/><rect x="43.2" y="237.21" width="3" height="1.3" fill="#686868"/><rect x="43.2" y="241.47" width="3" height="1.3" fill="#686868"/><rect x="43.2" y="245.73" width="3" height="1.3" fill="#686868"/><rect x="43.2" y="249.99" width="3" height="1.3" fill="#686868"/><rect x="35" y="254.25" width="11.5" height="1.3" fill="#5a5a5a"/><rect x="43.2" y="258.51" width="3" height="1.3" fill="#686868"/><rect x="43.2" y="262.77" width="3" height="1.3" fill="#686868"/><rect x="43.2" y="267.03" width="3" height="1.3" fill="#686868"/><rect x="43.2" y="271.29" width="3" height="1.3" fill="#686868"/><rect x="40.2" y="275.55" width="6" height="1.3" fill="#606060"/><rect x="43.2" y="279.81" width="3" height="1.3" fill="#686868"/><rect x="43.2" y="284.07" width="3" height="1.3" fill="#686868"/><rect x="43.2" y="288.33" width="3" height="1.3" fill="#686868"/><rect x="43.2" y="292.59" width="3" height="1.3" fill="#686868"/><rect x="35" y="296.85" width="11.5" height="1.3" fill="#5a5a5a"/><rect x="43.2" y="301.11" width="3" height="1.3" fill="#686868"/><rect x="43.2" y="305.37" width="3" height="1.3" fill="#686868"/><rect x="43.2" y="309.63" width="3" height="1.3" fill="#686868"/><rect x="43.2" y="313.89" width="3" height="1.3" fill="#686868"/><rect x="40.2" y="318.15" width="6" height="1.3" fill="#606060"/><rect x="43.2" y="322.41" width="3" height="1.3" fill="#686868"/><rect x="43.2" y="326.67" width="3" height="1.3" fill="#686868"/><rect x="43.2" y="330.93" width="3" height="1.3" fill="#686868"/><rect x="43.2" y="335.19" width="3" height="1.3" fill="#686868"/><rect x="35" y="339.45" width="11.5" height="1.3" fill="#5a5a5a"/><rect x="43.2" y="343.71" width="3" height="1.3" fill="#686868"/><rect x="43.2" y="347.97" width="3" height="1.3" fill="#686868"/><rect x="43.2" y="352.23" width="3" height="1.3" fill="#686868"/><rect x="43.2" y="356.49" width="3" height="1.3" fill="#686868"/><rect x="40.2" y="360.75" width="6" height="1.3" fill="#606060"/><rect x="43.2" y="365.01" width="3" height="1.3" fill="#686868"/><rect x="43.2" y="369.27" width="3" height="1.3" fill="#686868"/><rect x="43.2" y="373.53" width="3" height="1.3" fill="#686868"/><rect x="43.2" y="377.79" width="3" height="1.3" fill="#686868"/><rect x="35" y="382.05" width="11.5" height="1.3" fill="#5a5a5a"/><rect x="43.2" y="386.31" width="3" height="1.3" fill="#686868"/><rect x="43.2" y="390.57" width="3" height="1.3" fill="#686868"/><rect x="43.2" y="394.83" width="3" height="1.3" fill="#686868"/><rect x="43.2" y="399.09" width="3" height="1.3" fill="#686868"/><rect x="40.2" y="403.35" width="6" height="1.3" fill="#606060"/><rect x="43.2" y="407.61" width="3" height="1.3" fill="#686868"/><rect x="43.2" y="411.87" width="3" height="1.3" fill="#686868"/><rect x="43.2" y="416.13" width="3" height="1.3" fill="#686868"/><rect x="43.2" y="420.39" width="3" height="1.3" fill="#686868"/><rect x="35" y="424.65" width="11.5" height="1.3" fill="#5a5a5a"/><rect x="43.2" y="428.91" width="3" height="1.3" fill="#686868"/></svg>
<svg style="left:43.4px;top:82.4px;width:4px;height:5px" viewBox="0 0 4 5"><path d="M0.4 0.4 V4.6 L3.6 2.5 Z" fill="#222"/></svg>
<div style="left:47px;top:71px;width:565.2px;height:360.3px;background:#fff;"></div>
<div style="left:306.7px;top:126.8px;width:181.7px;height:255.2px;background:#fff;border:1px solid #a9a9a9;border-right:2.4px solid #6a6a6a;border-bottom:2px solid #6a6a6a;"></div>
<svg style="left:315px;top:148px;width:164px;height:130px" viewBox="315 148 164 130"><rect x="321.95" y="155.25" width="148.9" height="114.1" fill="#ffff00" stroke="#000" stroke-width="1.9"/><rect x="320.7" y="154.1" width="151.3" height="116.6" fill="none" stroke="#f4f4f8" stroke-width="1" stroke-dasharray="2.65 2.65"/><rect x="320.7" y="154.1" width="151.3" height="116.6" fill="none" stroke="#10186e" stroke-width="1" stroke-dasharray="2.65 2.65" stroke-dashoffset="2.65"/><rect x="319.3" y="152.5" width="5.6" height="5.9" fill="#fff" stroke="#6e6e6e" stroke-width="0.8"/><rect x="468.7" y="268.9" width="5.6" height="5.6" fill="#fff" stroke="#6e6e6e" stroke-width="0.8"/><circle cx="471.4" cy="155.5" r="2.9" fill="#fff" stroke="#555" stroke-width="0.8"/><path d="M393.5 210.4 L399.6 216.5 M399.6 210.4 L393.5 216.5" stroke="#5a5a00" stroke-width="1"/></svg>
<div style="left:1px;top:111px;width:99.7px;height:27.2px;background:#333333;border-radius:3px;"></div>
<div style="left:10px;top:128.2px;width:12.6px;height:6px;background:#272727;border-radius:1px;"></div>
<span class="t" style="left:9.50px;top:117.80px;font-size:8.1px;color:#e6e6e6;letter-spacing:-0.097px;">Edit paths by nodes (N)</span>
<svg style="left:80px;top:88px;width:142px;height:60px" viewBox="80 88 142 60"><path d="M88.2 117.9 L151.2 95 V106.4 H215.6 V129.1 H151.2 V140.6 Z" fill="none" stroke="#000" stroke-width="3.2" stroke-linejoin="miter"/></svg>
<div style="left:612.2px;top:71px;width:12.8px;height:372px;background:#cdcecd;"></div>
<div style="left:616.2px;top:156px;width:4.2px;height:188px;background:#7c7f7e;border-radius:2px;"></div>
<div style="left:47px;top:431.3px;width:566px;height:11.7px;background:#cdcecd;"></div>
<div style="left:49.5px;top:435.1px;width:478px;height:4px;background:#7c7f7e;border-radius:2px;"></div>
<div style="left:613px;top:59px;width:11.5px;height:12px;background:#f4f3f1;border:1px solid #c9c6c2;border-radius:2px;"></div>
<svg style="left:615.4px;top:61.6px;width:7px;height:7px" viewBox="0 0 7 7"><rect x="1.2" y="1.4" width="4.2" height="4.6" rx="1" fill="none" stroke="#8a8a8a" stroke-width="0.7"/><path d="M2.4 2.6 H4.2 V4.8" fill="none" stroke="#8a8a8a" stroke-width="0.6"/></svg>
<div style="left:612.6px;top:431.4px;width:12.2px;height:11.6px;background:#f4f4f3;border-radius:2px;"></div>
<svg style="left:614px;top:432.4px;width:10px;height:10px" viewBox="0 0 10 10"><path d="M1.2 0.8 L8.6 5.4 L1.6 9.4 Z" fill="#d6efd2"/><path d="M1.4 5.6 L4.8 5.2 L4.4 8 L1.6 9.4 Z" fill="#c9d0fa"/><path d="M5 5 L8.6 5.4 L5.6 7.2 Z" fill="#f9c9c9"/></svg>
<div style="left:625px;top:58px;width:234px;height:385px;background:#f6f5f4;"></div><svg style="left:626px;top:64px;width:11px;height:11px" viewBox="0 0 11 11"><path d="M1.4 9.6 Q2 3 9.4 1.6" fill="none" stroke="#3f8a2f" stroke-width="1.3"/><path d="M2 9 Q3 4.4 7.4 3.4" fill="none" stroke="#333" stroke-width="0.7"/><rect x="0.4" y="8.6" width="1.8" height="1.8" fill="#2222ee"/><rect x="8.6" y="0.6" width="1.8" height="1.8" fill="#2222ee"/></svg><span class="t" style="left:636.60px;top:63.80px;font-size:8.3px;color:#2e3436;letter-spacing:-0.096px;">Path Effects (Ctrl+&amp;)</span><div style="left:818px;top:64px;width:7.5px;height:7.5px;background:#f3f2f0;border:1px solid #b9b6b2;border-radius:1.5px;"></div><svg style="left:819.5px;top:65.8px;width:4px;height:4px" viewBox="0 0 4 4"><path d="M3.4 0.4 V3.6 L0.8 2 Z" fill="#444"/></svg><div style="left:842.5px;top:64px;width:7.5px;height:7.5px;background:#f3f2f0;border:1px solid #b9b6b2;border-radius:1.5px;"></div><svg style="left:844.2px;top:65.8px;width:4px;height:4px" viewBox="0 0 4 4"><path d="M0.3 0.3 L3.7 3.7 M3.7 0.3 L0.3 3.7" stroke="#444" stroke-width="0.8"/></svg><div style="left:625.5px;top:82px;width:233.5px;height:88px;border:1px solid #d6d3cf;border-left:none;background:#f6f5f4;"></div><div style="left:627.5px;top:85px;width:229px;height:46.5px;background:#fff;border:1px solid #d0cdc9;"></div><svg style="left:651px;top:138px;width:10px;height:10px" viewBox="0 0 10 10"><path d="M5 1 V9 M1 5 H9" stroke="#2d5f94" stroke-width="2.6"/><path d="M5 1.6 V8.4 M1.6 5 H8.4" stroke="#4a86c8" stroke-width="1.2"/></svg><div style="left:709px;top:142px;width:8px;height:2.2px;background:#c5d1df;border-radius:1px;"></div><svg style="left:764.5px;top:137.5px;width:11px;height:11px" viewBox="0 0 11 11"><path d="M5.5 1 L10 5.4 H7.4 V6.6 H3.6 V5.4 H1 Z M3.6 8 H7.4 V10 H3.6 Z" fill="none" stroke="#e3e2e0" stroke-width="0.8"/></svg><svg style="left:821.5px;top:137.5px;width:11px;height:11px" viewBox="0 0 11 11"><path d="M5.5 10 L10 5.6 H7.4 V4.4 H3.6 V5.6 H1 Z M3.6 1 H7.4 V3 H3.6 Z" fill="none" stroke="#e3e2e0" stroke-width="0.8"/></svg><span class="t" style="left:691.00px;top:155.80px;font-size:8.2px;color:#2e3436;letter-spacing:-0.011px;">Click button to add an effect</span>
<div style="left:859px;top:58px;width:60px;height:385px;background:#f6f5f4;"></div><div class="sel" style="left:892px;top:62px;width:24px;height:22.5px;"></div><div class="sel" style="left:892px;top:221.7px;width:24px;height:22.5px;"></div><div class="sel" style="left:892px;top:292.6px;width:24px;height:22.5px;"></div><div class="sel" style="left:892px;top:372.4px;width:24px;height:22.5px;"></div><div class="sep" style="left:863px;top:160px;width:23px;height:1px;"></div><div class="sep" style="left:863px;top:216px;width:23px;height:1px;"></div><div class="sep" style="left:863px;top:273px;width:23px;height:1px;"></div><div class="sep" style="left:863px;top:353px;width:23px;height:1px;"></div><div class="sep" style="left:892px;top:90px;width:24px;height:1px;"></div><div class="sep" style="left:892px;top:216px;width:24px;height:1px;"></div><div class="sep" style="left:892px;top:367px;width:24px;height:1px;"></div><svg style="left:868.20px;top:66.90px;width:13px;height:13px" viewBox="0 0 13 13"><path d="M2 1 H7.6 L10 3.4 V12 H2 Z" fill="#fff" stroke="#c9c9c9" stroke-width="0.8"/><circle cx="9.8" cy="6.6" r="2.6" fill="#2f6fb5"/><path d="M9.8 5.2 V8 M8.4 6.6 H11.2" stroke="#fff" stroke-width="0.9"/></svg><svg style="left:868.20px;top:90.60px;width:13px;height:12px" viewBox="0 0 13 12"><path d="M1 2 H5 L6 3.4 H11 V10.6 H1 Z" fill="#c8ad7f" stroke="#a58a5c" stroke-width="0.6"/><rect x="2.4" y="4.4" width="8" height="3" fill="#efe9dc"/><path d="M1 6.4 H12 V10.8 H1 Z" fill="#dcc69e" stroke="#b59a6c" stroke-width="0.5"/></svg><svg style="left:868.70px;top:114.50px;width:12px;height:13px" viewBox="0 0 12 13"><path d="M4.6 1 H7.4 V6 H9.6 L6 9.4 L2.4 6 H4.6 Z" fill="#f4f4f4" stroke="#555" stroke-width="0.8"/><path d="M1.2 8.6 H10.8 V12 H1.2 Z" fill="#3f86c8" stroke="#2a5f98" stroke-width="0.6"/></svg><svg style="left:868.20px;top:137.20px;width:13px;height:13px" viewBox="0 0 13 13"><rect x="1.2" y="1.2" width="10.6" height="8" rx="1" fill="#2e2e2e"/><rect x="3" y="2.6" width="7" height="2.2" fill="#f4f4f4"/><path d="M3 7 H10 V11.8 H3 Z" fill="#fff" stroke="#2e2e2e" stroke-width="0.9"/></svg><svg style="left:868.20px;top:170.20px;width:13px;height:13px" viewBox="0 0 13 13"><path d="M4 1.4 H8.6 L11 3.8 V11.8 H4 V9 M4 4.4 V1.4" fill="#fff" stroke="#333" stroke-width="0.9"/><path d="M0.8 6.6 H6.6 M4.8 4.6 L6.8 6.6 L4.8 8.6" fill="none" stroke="#111" stroke-width="1.1"/></svg><svg style="left:868.20px;top:193.50px;width:13px;height:13px" viewBox="0 0 13 13"><path d="M2 1.4 H7 L9.4 3.8 V11.8 H2 Z" fill="#fff" stroke="#333" stroke-width="0.9"/><path d="M6.4 7 H12.2 M10.4 5 L12.4 7 L10.4 9" fill="none" stroke="#111" stroke-width="1.1"/></svg><svg style="left:868.20px;top:227.00px;width:13px;height:12px" viewBox="0 0 13 12"><path d="M5.4 1.4 L1.4 4.6 L5.4 7.6 V5.8 Q10 5.2 10.2 8.2 Q10.2 10 8 10.6 Q12.4 10.4 12.2 7 Q11.8 3 5.4 3.2 Z" fill="#f0c73a" stroke="#c49a12" stroke-width="0.7"/></svg><svg style="left:868.20px;top:250.40px;width:13px;height:12px" viewBox="0 0 13 12"><path d="M7.6 1.4 L11.6 4.6 L7.6 7.6 V5.8 Q3 5.2 2.8 8.2 Q2.8 10 5 10.6 Q0.6 10.4 0.8 7 Q1.2 3 7.6 3.2 Z" fill="#d9f0da" stroke="#c2e4c4" stroke-width="0.7"/></svg><svg style="left:868.20px;top:282.90px;width:13px;height:13px" viewBox="0 0 13 13"><rect x="1.4" y="1.4" width="7" height="7" rx="1" fill="#fff" stroke="#8a8a8a" stroke-width="0.9"/><rect x="4.8" y="4.8" width="7" height="7" rx="1" fill="#fff" stroke="#8a8a8a" stroke-width="0.9"/><path d="M3 3.6 H7" stroke="#aaa" stroke-width="0.6"/></svg><svg style="left:868.20px;top:306.90px;width:13px;height:13px" viewBox="0 0 13 13"><path d="M2.4 1.4 L8.6 9 M10.6 1.4 L4.4 9" stroke="#9a9a9a" stroke-width="1.1"/><circle cx="3.6" cy="10" r="2.3" fill="#e02222"/><circle cx="9.4" cy="10" r="2.3" fill="#e02222"/><circle cx="3.6" cy="10" r="0.8" fill="#f9b0b0"/><circle cx="9.4" cy="10" r="0.8" fill="#f9b0b0"/></svg><svg style="left:868.20px;top:329.90px;width:13px;height:13px" viewBox="0 0 13 13"><rect x="1.4" y="1.8" width="9.6" height="10.4" rx="1" fill="#d9a25a" stroke="#a9742f" stroke-width="0.8"/><rect x="4" y="0.8" width="4.4" height="2.2" fill="#8a8a8a"/><rect x="4" y="4.4" width="7.6" height="7.6" fill="#fff" stroke="#8a8a8a" stroke-width="0.6"/><path d="M5.4 6.4 H10 M5.4 8.2 H10 M5.4 10 H9" stroke="#aaa" stroke-width="0.6"/></svg><svg style="left:868.60px;top:362.90px;width:13px;height:13px" viewBox="0 0 13 13"><circle cx="5.8" cy="5.8" r="4.4" fill="#fff" stroke="#555" stroke-width="1.1"/><rect x="3.4" y="3.6" width="4.6" height="4" fill="#e9eef4" stroke="#9aa" stroke-width="0.5"/><path d="M9 9 L12 12" stroke="#111" stroke-width="1.9" stroke-linecap="round"/></svg><svg style="left:868.60px;top:386.70px;width:13px;height:13px" viewBox="0 0 13 13"><circle cx="5.8" cy="5.8" r="4.4" fill="#fff" stroke="#555" stroke-width="1.1"/><path d="M3.4 5.4 L7 3.4 L8.4 6 L5 8 Z" fill="#f2d98a" stroke="#a98" stroke-width="0.5"/><path d="M9 9 L12 12" stroke="#111" stroke-width="1.9" stroke-linecap="round"/></svg><svg style="left:872.20px;top:426.10px;width:5px;height:7px" viewBox="0 0 5 7"><path d="M0.6 0.2 V6.8 L4.6 3.5 Z" fill="#2a2a2a"/></svg><svg style="left:901.90px;top:426.10px;width:5px;height:7px" viewBox="0 0 5 7"><path d="M0.6 0.2 V6.8 L4.6 3.5 Z" fill="#2a2a2a"/></svg><svg style="left:898.20px;top:67.20px;width:12px;height:12px" viewBox="0 0 12 12"><path d="M3 3 L9.4 9.6" stroke="#222" stroke-width="1"/><path d="M6 4.8 L8.4 7 L5.6 7.2 Z" fill="#111"/><circle cx="3" cy="2.8" r="1.9" fill="#4a4af2" stroke="#2222b0" stroke-width="0.4"/><path d="M9.6 7.8 L11.4 9.6 L9.6 11.4 L7.8 9.6 Z" fill="#9fd89f" stroke="#2f8a3a" stroke-width="0.8"/></svg><svg style="left:898.20px;top:99.40px;width:12px;height:12px" viewBox="0 0 12 12"><path d="M3 3 L9.4 9.6" stroke="#222" stroke-width="1"/><path d="M6 4.8 L8.4 7 L5.6 7.2 Z" fill="#111"/><circle cx="3" cy="2.8" r="1.9" fill="#4a4af2" stroke="#2222b0" stroke-width="0.4"/><path d="M9.6 7.8 L11.4 9.6 L9.6 11.4 L7.8 9.6 Z" fill="#9fd89f" stroke="#2f8a3a" stroke-width="0.8"/></svg><svg style="left:898.20px;top:123.30px;width:12px;height:12px" viewBox="0 0 12 12"><path d="M1.4 10.6 H10 V2" fill="none" stroke="#e3e1de" stroke-width="0.8" stroke-dasharray="1.2 1"/></svg><svg style="left:898.20px;top:147.60px;width:12px;height:12px" viewBox="0 0 12 12"><path d="M1.4 8.6 H10.6 M8.6 1.4 V10.6" fill="none" stroke="#e3e1de" stroke-width="0.8"/><circle cx="8.6" cy="8.6" r="1" fill="#e3e1de"/></svg><svg style="left:898.20px;top:171.00px;width:12px;height:12px" viewBox="0 0 12 12"><path d="M1.4 10 H10 M8.6 2.6 V10" fill="none" stroke="#e3e1de" stroke-width="0.8"/><path d="M8.6 1.4 L9.8 3.4 H7.4 Z" fill="#e3e1de"/></svg><svg style="left:898.20px;top:194.40px;width:12px;height:12px" viewBox="0 0 12 12"><path d="M2 9.6 H9.6 V2.4" fill="none" stroke="#e3e1de" stroke-width="0.8"/><rect x="3.6" y="3.4" width="3" height="3" fill="#e3e1de"/></svg><svg style="left:898.20px;top:227.20px;width:12px;height:12px" viewBox="0 0 12 12"><path d="M3 3 L9.4 9.6" stroke="#222" stroke-width="1"/><path d="M6 4.8 L8.4 7 L5.6 7.2 Z" fill="#111"/><circle cx="3" cy="2.8" r="1.9" fill="#4a4af2" stroke="#2222b0" stroke-width="0.4"/><path d="M9.6 7.8 L11.4 9.6 L9.6 11.4 L7.8 9.6 Z" fill="#9fd89f" stroke="#2f8a3a" stroke-width="0.8"/></svg><svg style="left:897.70px;top:250.60px;width:13px;height:12px" viewBox="0 0 13 12"><path d="M1.4 2 Q8.6 1.6 9 8.4" fill="none" stroke="#2f9a3a" stroke-width="1.3"/><path d="M6.4 7.4 L9.2 10.8 L11.6 6.8 Z" fill="#2f9a3a"/></svg><svg style="left:897.70px;top:275.00px;width:13px;height:12px" viewBox="0 0 13 12"><path d="M1.6 10.4 L11.4 1.6" stroke="#3a3a3a" stroke-width="0.9"/><path d="M3 9.2 L10.4 4" stroke="#2f9a3a" stroke-width="1.2"/><path d="M6.4 4.6 L8.2 6.4 L6.4 8.2 L4.6 6.4 Z" fill="#6abf6a" stroke="#2f7a3a" stroke-width="0.5"/></svg><svg style="left:897.70px;top:298.50px;width:13px;height:13px" viewBox="0 0 13 13"><path d="M1.4 2 Q9.6 2 8.4 10.6" fill="none" stroke="#6a6a6a" stroke-width="1"/><circle cx="7.6" cy="9" r="1.9" fill="#3f9a4a" stroke="#2a6a30" stroke-width="0.5"/><path d="M8.6 6 L11.2 8.4 L8.2 9 Z" fill="#2f8a3a"/></svg><svg style="left:897.70px;top:319.60px;width:13px;height:12px" viewBox="0 0 13 12"><path d="M4 2.4 H7.6 Q10 2.4 10 5 V10.4" fill="none" stroke="#6a6a6a" stroke-width="0.9"/><path d="M3 1.8 L6 2.4 L4.4 5 Z M10 7 L12 10.6 L8.4 10 Z" fill="#2f9a3a"/></svg><svg style="left:897.70px;top:344.40px;width:13px;height:12px" viewBox="0 0 13 12"><path d="M1.8 10.4 L11.2 1.8" stroke="#e0483c" stroke-width="1.7"/><circle cx="6.4" cy="6.2" r="1.6" fill="#4fae5a"/><circle cx="3.4" cy="9" r="1" fill="#9fd89f"/><circle cx="9.6" cy="3.4" r="1" fill="#9fd89f"/></svg><svg style="left:898.20px;top:378.20px;width:12px;height:12px" viewBox="0 0 12 12"><path d="M3 3 L9.4 9.6" stroke="#222" stroke-width="1"/><path d="M6 4.8 L8.4 7 L5.6 7.2 Z" fill="#111"/><circle cx="3" cy="2.8" r="1.9" fill="#4a4af2" stroke="#2222b0" stroke-width="0.4"/><path d="M9.6 7.8 L11.4 9.6 L9.6 11.4 L7.8 9.6 Z" fill="#9fd89f" stroke="#2f8a3a" stroke-width="0.8"/></svg>
<div style="left:0px;top:443px;width:919px;height:15px;background:#f6f5f4;"></div><div style="left:0px;top:443px;width:894.6px;height:14.5px;background:linear-gradient(90deg,#fff 0,#fff 12.78px,#000000 12.78px,#000000 25.56px,#1a1a1a 25.56px,#1a1a1a 38.34px,#333333 38.34px,#333333 51.12px,#4d4d4d 51.12px,#4d4d4d 63.90px,#666666 63.90px,#666666 76.68px,#808080 76.68px,#808080 89.46px,#999999 89.46px,#999999 102.24px,#b3b3b3 102.24px,#b3b3b3 115.02px,#cccccc 115.02px,#cccccc 127.80px,#e6e6e6 127.80px,#e6e6e6 140.58px,#ececec 140.58px,#ececec 153.36px,#f2f2f2 153.36px,#f2f2f2 166.14px,#f9f9f9 166.14px,#f9f9f9 178.92px,#ffffff 178.92px,#ffffff 191.70px,#800000 191.70px,#800000 204.48px,#ff0000 204.48px,#ff0000 217.26px,#808000 217.26px,#808000 230.04px,#ffff00 230.04px,#ffff00 242.82px,#008000 242.82px,#008000 255.60px,#00ff00 255.60px,#00ff00 268.38px,#008080 268.38px,#008080 281.16px,#00ffff 281.16px,#00ffff 293.94px,#000080 293.94px,#000080 306.72px,#0000ff 306.72px,#0000ff 319.50px,#800080 319.50px,#800080 332.28px,#ff00ff 332.28px,#ff00ff 345.06px,#2b0000 345.06px,#2b0000 357.84px,#550000 357.84px,#550000 370.62px,#800000 370.62px,#800000 383.40px,#aa0000 383.40px,#aa0000 396.18px,#d40000 396.18px,#d40000 408.96px,#ff0000 408.96px,#ff0000 421.74px,#ff2a2a 421.74px,#ff2a2a 434.52px,#ff5555 434.52px,#ff5555 447.30px,#ff8080 447.30px,#ff8080 460.08px,#ffaaaa 460.08px,#ffaaaa 472.86px,#ffd5d5 472.86px,#ffd5d5 485.64px,#280b0b 485.64px,#280b0b 498.42px,#501616 498.42px,#501616 511.20px,#782121 511.20px,#782121 523.98px,#a02c2c 523.98px,#a02c2c 536.76px,#c83737 536.76px,#c83737 549.54px,#d35f5f 549.54px,#d35f5f 562.32px,#de8787 562.32px,#de8787 575.10px,#e9afaf 575.10px,#e9afaf 587.88px,#f4d7d7 587.88px,#f4d7d7 600.66px,#241c1c 600.66px,#241c1c 613.44px,#483737 613.44px,#483737 626.22px,#6c5353 626.22px,#6c5353 639.00px,#916f6f 639.00px,#916f6f 651.78px,#ac9393 651.78px,#ac9393 664.56px,#c8b7b7 664.56px,#c8b7b7 677.34px,#e3dbdb 677.34px,#e3dbdb 690.12px,#2b1100 690.12px,#2b1100 702.90px,#552200 702.90px,#552200 715.68px,#803300 715.68px,#803300 728.46px,#aa4400 728.46px,#aa4400 741.24px,#d45500 741.24px,#d45500 754.02px,#ff6600 754.02px,#ff6600 766.80px,#ff7f2a 766.80px,#ff7f2a 779.58px,#ff9955 779.58px,#ff9955 792.36px,#ffb380 792.36px,#ffb380 805.14px,#ffccaa 805.14px,#ffccaa 817.92px,#ffe6d5 817.92px,#ffe6d5 830.70px,#28170b 830.70px,#28170b 843.48px,#502d16 843.48px,#502d16 856.26px,#784421 856.26px,#784421 869.04px,#a05a2c 869.04px,#a05a2c 881.82px,#c87137 881.82px,#c87137 894.60px);"></div><svg style="left:0px;top:443px;width:13px;height:14.5px" viewBox="0 0 13 14.5"><path d="M0.3 0.6 L12.6 14 M12.6 0.6 L0.3 14" stroke="#a61b1b" stroke-width="1.3" fill="none"/></svg><svg style="left:903px;top:452px;width:6px;height:6px" viewBox="0 0 6 6"><path d="M5 0 V6 L0.5 3 Z" fill="#222"/></svg><div style="left:0px;top:457.5px;width:895px;height:8px;background:#cfcfcd;"></div><div style="left:2px;top:460px;width:140px;height:4px;background:#7c7f7e;border-radius:2px;"></div>
<div style="left:0px;top:465.5px;width:919px;height:24px;background:#f6f5f4;"></div><span class="t" style="left:1.80px;top:465.00px;font-size:8.4px;color:#33383b;letter-spacing:-0.220px;transform-origin:0 50%;transform:scaleX(0.9275);">Fill:</span><span class="t" style="left:1.80px;top:476.20px;font-size:8.4px;color:#33383b;letter-spacing:-0.220px;transform-origin:0 50%;transform:scaleX(0.9252);">Stroke:</span><div style="left:28.1px;top:466px;width:21.8px;height:11.5px;background:#ffff00;"></div><div style="left:28.1px;top:477.5px;width:21.8px;height:11.3px;background:#000;border-radius:0 0 2px 2px;"></div><span class="t" style="left:52.60px;top:476.20px;font-size:8.4px;color:#33383b;letter-spacing:0.017px;">2.96</span><span class="t" style="left:71.20px;top:470.60px;font-size:8.2px;color:#33383b;letter-spacing:-0.220px;transform-origin:0 50%;transform:scaleX(0.8890);">O:</span><div style="left:80.4px;top:467px;width:45.2px;height:21.5px;background:#fff;border:1px solid #e0deda;border-radius:3px;"></div><div style="left:102px;top:468px;width:1px;height:19.5px;background:#ecebe8;"></div><div style="left:113.5px;top:468px;width:1px;height:19.5px;background:#ecebe8;"></div><span class="t" style="left:82.60px;top:471.00px;font-size:8.4px;color:#15191b;letter-spacing:-0.220px;transform-origin:0 50%;transform:scaleX(0.9871);">100</span><div style="left:105px;top:477.3px;width:7px;height:1.2px;background:#2e3436;"></div><div style="left:116.5px;top:477.4px;width:7px;height:1px;background:#d3d1ce;"></div><div style="left:119.5px;top:474.5px;width:1px;height:7px;background:#d3d1ce;"></div><div style="left:128.5px;top:467px;width:1px;height:21px;background:#eceae7;"></div><svg style="left:135px;top:472px;width:13px;height:11px" viewBox="0 0 13 11"><path d="M1 6.2 Q6.5 1.6 12 6.2 Q6.5 10.6 1 6.2 Z" fill="#fff" stroke="#1c1c1c" stroke-width="1"/><circle cx="6.5" cy="6.2" r="2.1" fill="#1c1c1c"/><path d="M3 3.4 L2 1.4 M5 2.6 L4.6 0.6 M8 2.6 L8.4 0.6 M10 3.4 L11 1.4" stroke="#1c1c1c" stroke-width="0.9"/></svg><svg style="left:160px;top:471px;width:11px;height:13px" viewBox="0 0 11 13"><path d="M3.2 6.6 V4 A2.4 2.4 0 0 1 8 3.2 L8.4 4.4" fill="none" stroke="#333" stroke-width="1.2"/><rect x="1.6" y="6.4" width="7.6" height="5.6" rx="0.8" fill="#e9dca0" stroke="#4a4434" stroke-width="0.9"/><rect x="4.6" y="8" width="1.6" height="2.4" fill="#8a7a30"/></svg><div style="left:177.6px;top:466.5px;width:52.8px;height:22.5px;background:linear-gradient(#f7f6f5,#ecebe9);border:1px solid #dad6d2;border-radius:3px;"></div><span class="t" style="left:186.60px;top:471.00px;font-size:7.4px;color:#2a2d30;font-weight:bold;letter-spacing:-0.220px;transform-origin:0 50%;transform:scaleX(0.9122);">•Layer 1</span><svg style="left:215px;top:476px;width:7px;height:4px" viewBox="0 0 7 4"><path d="M0 0 H7 L3.5 4 Z" fill="#2e3436"/></svg><span class="t" style="left:231.60px;top:471.00px;font-size:8.4px;color:#33383b;letter-spacing:0.080px;">Drag to select objects to edit</span><div style="left:691px;top:467px;width:1px;height:21px;background:#eceae7;"></div><span class="t" style="left:698.00px;top:464.60px;font-size:8px;color:#33383b;letter-spacing:-0.220px;transform-origin:0 50%;transform:scaleX(0.9266);">X:</span><span class="t" style="left:698.30px;top:476.20px;font-size:8px;color:#33383b;letter-spacing:-0.220px;transform-origin:0 50%;transform:scaleX(0.9569);">Y:</span><span class="t" style="left:711.90px;top:464.60px;font-size:8.3px;color:#33383b;letter-spacing:0.092px;">-125.92</span><span class="t" style="left:716.60px;top:476.20px;font-size:8.3px;color:#33383b;letter-spacing:0.093px;">-48.79</span><span class="t" style="left:747.00px;top:471.00px;font-size:8.2px;color:#33383b;letter-spacing:-0.220px;transform-origin:0 50%;transform:scaleX(0.9905);">Z:</span><div style="left:762px;top:467px;width:61.5px;height:21.5px;background:#fff;border:1px solid #e0deda;border-radius:3px;"></div><div style="left:794px;top:468px;width:1px;height:19.5px;background:#ecebe8;"></div><div style="left:808.5px;top:468px;width:1px;height:19.5px;background:#ecebe8;"></div><span class="t" style="left:769.60px;top:471.00px;font-size:8.4px;color:#15191b;letter-spacing:0.094px;">34%</span><div style="left:797.5px;top:477.3px;width:7px;height:1.2px;background:#2e3436;"></div><div style="left:812px;top:477.3px;width:7px;height:1.2px;background:#2e3436;"></div><div style="left:814.9px;top:474.4px;width:1.2px;height:7px;background:#2e3436;"></div><span class="t" style="left:831.00px;top:471.00px;font-size:8.2px;color:#8f8a82;letter-spacing:-0.220px;transform-origin:0 50%;transform:scaleX(0.8145);">R:</span><div style="left:843.4px;top:466px;width:69.2px;height:25.4px;background:linear-gradient(#ffffff,#eef1f8 90%);border:1px solid #8d8f93;border-radius:2px;box-shadow:1px 1px 1px rgba(0,0,0,.45);"></div><span class="t" style="left:846.60px;top:465.00px;font-size:8px;color:#6a6a6a;letter-spacing:-0.198px;">AndroidAP998F&nbsp; 2</span><span class="t" style="left:846.60px;top:476.20px;font-size:8px;color:#6a6a6a;font-style:italic;letter-spacing:-0.220px;transform-origin:0 50%;transform:scaleX(0.9928);">Internet access</span>
<div style="left:0px;top:488.6px;width:919px;height:1px;background:#fcfcfb;"></div><div style="left:0px;top:489.4px;width:919px;height:26.6px;background:linear-gradient(90deg,#8499b6 0,#8499b6 39.5px,#a6bfdc 40px,#a8c2df 60px,#a8c2df 719px,#98b1d0 720px,#95aecd 727px,#8ba3c3 735px,#8197b6 742px,#7f94b2 100%);"></div><div style="left:40px;top:490px;width:680px;height:3px;background:linear-gradient(rgba(255,255,255,.22),rgba(255,255,255,0));"></div><div style="left:0px;top:489.2px;width:919px;height:1px;background:#7f8793;"></div><div style="left:726px;top:492px;width:9px;height:22px;background:repeating-linear-gradient(0deg,rgba(255,255,255,.10) 0,rgba(255,255,255,.10) 1px,rgba(0,0,0,0) 1px,rgba(0,0,0,0) 3px);"></div><div style="left:5.8px;top:490.6px;width:24.4px;height:24.4px;border-radius:50%;background:linear-gradient(#a3b7d0 0,#8aa3c4 22%,#4f7fb4 38%,#164a86 50%,#1a66b0 62%,#1e90dc 78%,#2fc4f4 100%);box-shadow:0 0 0 0.8px rgba(190,210,235,.55),0 0 2px rgba(30,50,80,.5);"></div><svg style="left:10.6px;top:495.2px;width:15px;height:15px" viewBox="0 0 15 15"><path d="M1.6 2.4 Q4.4 0.8 7.2 2.2 L6.4 6.8 Q3.8 5.6 0.8 7 Z" fill="#e8542a"/><path d="M8.2 2.6 Q11 4 14.2 2.6 L13.4 7.2 Q10.4 8.6 7.4 7.2 Z" fill="#7cc043"/><path d="M0.6 8 Q3.4 6.6 6.2 7.8 L5.4 12.4 Q2.6 11.2 -0.2 12.6 Z" fill="#3aa2e6"/><path d="M7.2 8.4 Q10.2 9.8 13.2 8.4 L12.4 13 Q9.4 14.4 6.4 13 Z" fill="#f6c22c"/></svg><div style="left:40.4px;top:490.2px;width:38.8px;height:25.2px;background:linear-gradient(#c5d6eb 0,#b6cbe5 45%,#a9c1df 55%,#adc5e2 100%);border:1px solid #8097b6;border-radius:2px;box-shadow:0 0 0 1px rgba(255,255,255,.4) inset;"></div><div style="left:81.8px;top:490.2px;width:39.4px;height:25.2px;background:linear-gradient(#c5d6eb 0,#b6cbe5 45%,#a9c1df 55%,#adc5e2 100%);border:1px solid #8097b6;border-radius:2px;box-shadow:0 0 0 1px rgba(255,255,255,.4) inset;"></div><div style="left:123.6px;top:490.2px;width:39.6px;height:25.2px;background:linear-gradient(#c5d6eb 0,#b6cbe5 45%,#a9c1df 55%,#adc5e2 100%);border:1px solid #8097b6;border-radius:2px;box-shadow:0 0 0 1px rgba(255,255,255,.4) inset;"></div><div style="left:165.4px;top:490.2px;width:39.2px;height:25.2px;background:linear-gradient(#cfdae6 0,#b4c2d2 30%,#9dadc1 55%,#b3c1d1 80%,#cbd6e2 100%);border:1px solid #6b7c93;border-radius:2px;box-shadow:0 0 0 1px rgba(255,255,255,.4) inset;"></div><div style="left:207px;top:490.2px;width:39.2px;height:25.2px;background:linear-gradient(#c5d6eb 0,#b6cbe5 45%,#a9c1df 55%,#adc5e2 100%);border:1px solid #8097b6;border-radius:2px;box-shadow:0 0 0 1px rgba(255,255,255,.4) inset;"></div><svg style="left:49px;top:493px;width:22px;height:21px" viewBox="0 0 22 21"><path d="M1 3 H8 L10 5 H21 V18.6 H1 Z" fill="#f1da88" stroke="#c9a84a" stroke-width="0.8"/><rect x="2.6" y="1.6" width="16" height="6.4" fill="#fbf4cf"/><circle cx="4.4" cy="2.6" r="1.1" fill="#3fbe3f"/><circle cx="9.4" cy="3.8" r="1.1" fill="#e04a3a"/><circle cx="14.6" cy="4.6" r="1.1" fill="#4a9ae8"/><path d="M1 7.6 H21 V18.8 H1 Z" fill="#f3dc85" stroke="#c9a84a" stroke-width="0.6"/><path d="M4.4 11.6 H17.6 V19.8 H14.4 V15.8 H7.6 V19.8 H4.4 Z" fill="#8fc8ee" stroke="#5aa2d2" stroke-width="0.6"/><rect x="7.6" y="15.8" width="6.8" height="4" fill="#a9d3ee"/></svg><svg style="left:91.2px;top:492.6px;width:20.4px;height:20.4px" viewBox="0 0 20.4 20.4"><circle cx="10.2" cy="10.2" r="10" fill="#db4437"/><path d="M10.2 10.2 L1.54 5.2 A10 10 0 0 0 10.2 20.2 L14.5 12.7 Z" fill="#0f9d58"/><path d="M10.2 20.2 A10 10 0 0 0 18.86 5.2 L10.2 5.2 L14.5 12.7 Z" fill="#ffcd40"/><circle cx="10.2" cy="10.2" r="4.7" fill="#f1f1f1"/><circle cx="10.2" cy="10.2" r="3.7" fill="#4285f4"/></svg><svg style="left:131.6px;top:491.4px;width:21.4px;height:20.8px" viewBox="0 0 21.4 20.8"><path d="M4 0.8 H19.4 V19.6 H1 V4 Z" fill="#c2d8ef" stroke="#6f9fd4" stroke-width="1"/><path d="M1.6 15.6 L5 12.8 L14 12.4 L20.4 10.6 L20.6 14 L19 19 H1.6 Z" fill="#fff"/><text x="10" y="14.4" font-family="Liberation Sans,sans-serif" font-weight="bold" font-size="14" text-anchor="middle" fill="#1763bd">W</text><path d="M1.8 16.4 L9 15.6 L19.6 14.6 L19 19 H1.8 Z" fill="#fff"/></svg><svg style="left:174.4px;top:492.2px;width:21px;height:20.6px" viewBox="0 0 21 20.6"><defs><linearGradient id="ikg" x1="0" y1="0" x2="0" y2="1"><stop offset="0" stop-color="#f4f4f4"/><stop offset="1" stop-color="#6a6a6a"/></linearGradient></defs><path d="M10.4 0.8 L20 9.6 Q20.6 10.6 19.4 11 L14.6 12.4 L17 14.2 L13.8 15.2 L14.4 17.4 Q11.6 20.4 8.6 18.8 L5.4 16.6 L8.2 15 L3.2 13 L5.4 11.6 L1.4 10.8 Q0.4 10.2 1 9.4 Z" fill="#0c0c0c"/><path d="M10.4 1.8 L15.6 6.8 L13.2 6 L11.6 8.4 L9.8 6.4 L7 9 L5.2 7 Z" fill="url(#ikg)"/><path d="M13.6 7.6 L18 10 L14.8 10.8 L13 9.6 Z" fill="#2a5fa8"/><circle cx="17" cy="15.6" r="0.8" fill="#111"/></svg><svg style="left:214px;top:491.6px;width:26px;height:23px" viewBox="0 0 26 23"><path d="M3.4 12.6 Q3 6 11.6 5 Q19.6 4.4 19.4 10.4 Q19 14 15.6 14.4 Q13 14.6 14 17.4 Q14.6 20.2 10.6 20.2 Q3.8 19.6 3.4 12.6 Z" fill="#d5e4f4" stroke="#8db0d6" stroke-width="0.9"/><circle cx="6.6" cy="12" r="1.7" fill="#e2443a"/><circle cx="9.8" cy="8.4" r="1.7" fill="#58b848"/><circle cx="14.4" cy="6.8" r="1.7" fill="#f2c82c"/><circle cx="11.4" cy="13.6" r="1.7" fill="#86b6e6"/><path d="M19.4 3.4 L21.4 4.6 L13.2 21 L12 20.4 Z" fill="#e8952e" stroke="#b06a14" stroke-width="0.5"/><path d="M18.6 0.8 L22.4 1.6 L22.6 5 L19.2 4 Z" fill="#d6a868" stroke="#9a6a2a" stroke-width="0.4"/></svg><div style="left:748.8px;top:497.6px;width:11.4px;height:11.2px;background:linear-gradient(#18a6ea,#1e88d8);"></div><svg style="left:748.8px;top:497.6px;width:11.4px;height:11.2px" viewBox="0 0 11.4 11.2"><path d="M2.6 6.8 A3.2 3.2 0 0 1 8.8 6.8 Q9 8.2 7.6 8.4 H3.8 Q2.4 8.2 2.6 6.8 Z" stroke="#bfe6ff" stroke-width="0.9" fill="none"/></svg><svg style="left:765px;top:497px;width:10px;height:12px" viewBox="0 0 10 12"><rect x="1.2" y="1.2" width="5.4" height="9" fill="#f4f4f4" stroke="#444" stroke-width="0.8"/><path d="M5 3 V5 M7.4 3 V5 M4.2 5 H8.4 V7.4 H4.2 Z M6.2 7.4 V10" stroke="#333" stroke-width="0.8" fill="#eee"/></svg><svg style="left:780px;top:497px;width:13px;height:12px" viewBox="0 0 13 12"><path d="M1 4.4 H3 L6 1.6 V10 L3 7.4 H1 Z" fill="#f2f2f2" stroke="#666" stroke-width="0.6"/><circle cx="9" cy="8.4" r="3" fill="#e02a2a"/><path d="M7.6 7 L10.4 9.8 M10.4 7 L7.6 9.8" stroke="#fff" stroke-width="0.9"/></svg><svg style="left:795.4px;top:497.2px;width:11px;height:11px" viewBox="0 0 11 11"><circle cx="5.5" cy="5.5" r="5.2" fill="#5cae3a"/><path d="M3.4 3 V5.6 A2.1 2.1 0 0 0 7.6 5.6 V3 M5.5 7.6 V9" stroke="#fff" stroke-width="1.1" fill="none"/></svg><svg style="left:812.5px;top:497px;width:12px;height:12px" viewBox="0 0 12 12"><rect x="0.5" y="0.5" width="5" height="5" fill="#e89a2a"/><rect x="6" y="1" width="5.4" height="5" fill="#2a7fd6"/><rect x="0.5" y="6" width="5" height="5.4" fill="#3fa34a"/><rect x="6" y="6.4" width="5.4" height="5" fill="#d8442a"/></svg><svg style="left:829px;top:497px;width:13px;height:12px" viewBox="0 0 13 12"><path d="M2 1 V11.4" stroke="#f4f4f4" stroke-width="1.3"/><path d="M2.8 1.6 Q5 0.8 6.6 1.8 Q8.6 2.8 11 2 V6.6 Q8.6 7.4 6.6 6.4 Q5 5.4 2.8 6.2 Z" fill="#f4f4f4" stroke="#6a7686" stroke-width="0.5"/></svg><svg style="left:845.5px;top:498px;width:12px;height:10px" viewBox="0 0 12 10"><path d="M0.5 9.5 L11 1 V9.5 Z" fill="#dfe3ea" stroke="#f4f6fa" stroke-width="0.6"/><path d="M3.5 9.5 V7.4 M5.5 9.5 V5.8 M7.5 9.5 V4.2 M9.5 9.5 V2.6" stroke="#8592a6" stroke-width="0.7"/></svg><span class="t" style="left:871.00px;top:491.30px;font-size:8.2px;color:#fff;letter-spacing:-0.220px;transform-origin:0 50%;transform:scaleX(0.9754);">6:26 PM</span><span class="t" style="left:867.60px;top:502.80px;font-size:8.2px;color:#fff;letter-spacing:-0.220px;transform-origin:0 50%;transform:scaleX(0.9908);">6/27/2021</span><div style="left:909.4px;top:489.8px;width:9.6px;height:26.2px;background:linear-gradient(#8a99b0,#7888a0 60%,#8fa0b8);border-left:1px solid #55647a;box-shadow:1px 0 0 rgba(255,255,255,.35) inset;"></div>
</body></html>
